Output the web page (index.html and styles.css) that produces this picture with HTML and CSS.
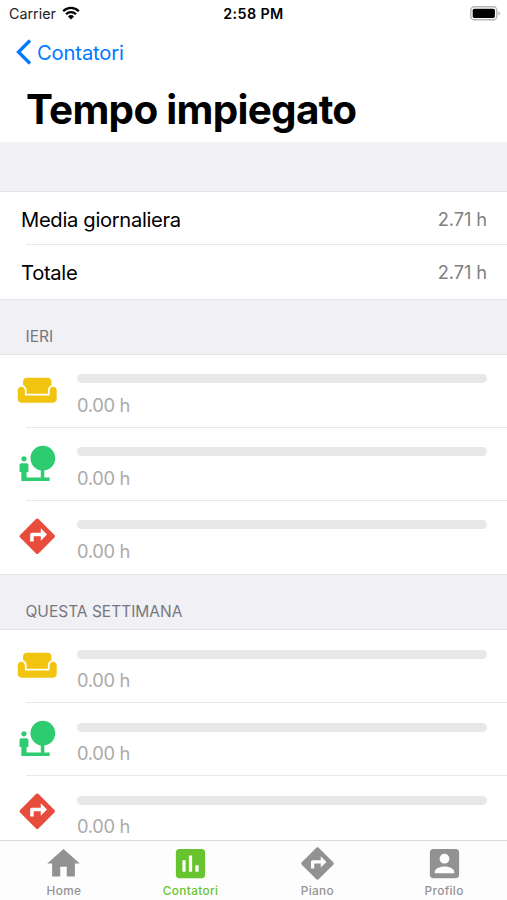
FILE: index.html
```html
<!DOCTYPE html>
<html lang="it">
<head>
    <meta charset="UTF-8">
    <meta name="viewport" content="width=device-width, initial-scale=1.0">
    <title>Tempo impiegato</title>
    <link rel="stylesheet" href="styles.css">
</head>
<body>
    <!-- Shared icons -->
    <svg class="sprite" width="0" height="0">
        <symbol id="sofa" viewBox="0 0 24 24"><path d="M21 10c-1.1 0-2 .9-2 2v3H5v-3c0-1.1-.9-2-2-2s-2 .9-2 2v5c0 1.1.9 2 2 2h18c1.1 0 2-.9 2-2v-5c0-1.1-.9-2-2-2zm-3-5H6c-1.1 0-2 .9-2 2v2.15c1.16.41 2 1.51 2 2.82V14h12v-2.03c0-1.3.84-2.4 2-2.82V7c0-1.1-.9-2-2-2z"/></symbol>
        <symbol id="nature" viewBox="0 0 24 24"><path d="M22.17 9.17c0-3.87-3.13-7-7-7s-7 3.13-7 7c0 3.47 2.52 6.34 5.83 6.89V20H6v-3h1v-4c0-.55-.45-1-1-1H3c-.55 0-1 .45-1 1v4h1v5h16v-2h-3v-3.88c3.47-.41 6.17-3.36 6.17-6.95zM4.5 11c.83 0 1.5-.67 1.5-1.5S5.33 8 4.5 8 3 8.67 3 9.5 3.67 11 4.5 11z"/></symbol>
        <symbol id="directions" viewBox="0 0 24 24"><path d="M21.71 11.29l-9-9c-.39-.39-1.02-.39-1.41 0l-9 9c-.39.39-.39 1.02 0 1.41l9 9c.39.39 1.02.39 1.41 0l9-9c.39-.38.39-1.01 0-1.41zM14 14.5V12h-4v3H8v-4c0-.55.45-1 1-1h5V7.5l3.5 3.5-3.5 3.5z"/></symbol>
    </svg>

    <div class="screen">
        <div class="status-bar">
            <div class="carrier">
                <span>Carrier</span>
                <svg class="wifi" viewBox="0 0 18 14">
                    <path d="M1.2 5.2a11 11 0 0 1 15.6 0M4 8.2a7.1 7.1 0 0 1 10 0" fill="none" stroke="#000" stroke-width="2.3"/>
                    <path d="M9 13.6L5.9 10.4a4.5 4.5 0 0 1 6.2 0z"/>
                </svg>
            </div>
            <div class="clock">2:58 PM</div>
            <svg class="battery" viewBox="0 0 31 15">
                <rect x=".8" y=".8" width="26" height="13" rx="3.6" fill="#fff" stroke="#b5b5b5" stroke-width="1.4"/>
                <rect x="2.7" y="2.7" width="22.2" height="9.2" rx="1.6"/>
                <path d="M28.4 5.2c2.2.8 2.2 3.4 0 4.2z" fill="#b5b5b5"/>
            </svg>
        </div>

        <div class="nav">
            <svg class="chevron" viewBox="0 0 16 26"><path d="M14 1.5L2.5 13 14 24.5" fill="none" stroke="#007aff" stroke-width="3.3"/></svg>
            <span>Contatori</span>
        </div>
        <h1>Tempo impiegato</h1>

        <div class="list">
            <div class="section-header first"></div>
            <div class="row summary"><span>Media giornaliera</span><span class="value">2.71 h</span></div>
            <div class="row summary"><span>Totale</span><span class="value">2.71 h</span></div>

            <div class="section-header">IERI</div>
            <div class="row">
                <svg class="icon yellow"><use href="#sofa"/></svg>
                <div class="meter"><div class="bar"></div><div class="hours">0.00 h</div></div>
            </div>
            <div class="row">
                <svg class="icon green"><use href="#nature"/></svg>
                <div class="meter"><div class="bar"></div><div class="hours">0.00 h</div></div>
            </div>
            <div class="row">
                <svg class="icon red"><use href="#directions"/></svg>
                <div class="meter"><div class="bar"></div><div class="hours">0.00 h</div></div>
            </div>

            <div class="section-header">QUESTA SETTIMANA</div>
            <div class="row">
                <svg class="icon yellow"><use href="#sofa"/></svg>
                <div class="meter"><div class="bar"></div><div class="hours">0.00 h</div></div>
            </div>
            <div class="row">
                <svg class="icon green"><use href="#nature"/></svg>
                <div class="meter"><div class="bar"></div><div class="hours">0.00 h</div></div>
            </div>
            <div class="row">
                <svg class="icon red"><use href="#directions"/></svg>
                <div class="meter"><div class="bar"></div><div class="hours">0.00 h</div></div>
            </div>
        </div>

        <div class="tab-bar">
            <div class="tab">
                <svg viewBox="0 0 24 24"><path d="M10 20v-6h4v6h5v-8h3L12 3 2 12h3v8z"/></svg>
                <span>Home</span>
            </div>
            <div class="tab active">
                <svg viewBox="0 0 24 24"><path d="M19 3H5c-1.1 0-2 .9-2 2v14c0 1.1.9 2 2 2h14c1.1 0 2-.9 2-2V5c0-1.1-.9-2-2-2zM9 17H7v-7h2v7zm4 0h-2V7h2v10zm4 0h-2v-4h2v4z"/></svg>
                <span>Contatori</span>
            </div>
            <div class="tab">
                <svg><use href="#directions"/></svg>
                <span>Piano</span>
            </div>
            <div class="tab">
                <svg viewBox="0 0 24 24"><path d="M3 5v14c0 1.1.89 2 2 2h14c1.1 0 2-.9 2-2V5c0-1.1-.9-2-2-2H5c-1.11 0-2 .9-2 2zm12 4c0 1.66-1.34 3-3 3s-3-1.34-3-3 1.34-3 3-3 3 1.34 3 3zm-9 8c0-2 4-3.1 6-3.1s6 1.1 6 3.1v1H6v-1z"/></svg>
                <span>Profilo</span>
            </div>
        </div>
    </div>
</body>
</html>
```
FILE: styles.css
```css
* {
    margin: 0;
    padding: 0;
    box-sizing: border-box;
}

body {
    font-family: Inter, 'Liberation Sans', sans-serif;
    background: #fff;
    color: #000;
    overflow: hidden;
}

svg {
    display: block;
    flex: none;
}

.sprite {
    position: absolute;
}

.screen {
    width: 507px;
    height: 900px;
    display: flex;
    flex-direction: column;
    overflow: hidden;
}

.status-bar {
    height: 27px;
    flex: none;
    display: grid;
    grid-template-columns: 1fr auto 1fr;
    align-items: center;
    padding: 0 6px 0 9px;
    font-size: 14.3px;
}

.carrier {
    display: flex;
    align-items: center;
    gap: 6px;
    color: #222;
}

.wifi {
    width: 18px;
    height: 14px;
    margin-top: -2px;
}

.clock {
    margin-right: 3px;
    font-weight: 600;
    letter-spacing: 0.4px;
}

.battery {
    width: 31px;
    height: 15px;
    margin-top: -1px;
    justify-self: end;
}

.nav {
    height: 50px;
    flex: none;
    display: flex;
    align-items: center;
    gap: 5px;
    padding-left: 16px;
    color: #007aff;
    font-size: 20.2px;
    letter-spacing: -0.15px;
}

.chevron {
    width: 16px;
    height: 26px;
}

h1 {
    height: 65px;
    flex: none;
    padding-left: 26px;
    font-size: 40.4px;
    line-height: 66px;
    font-weight: 700;
    letter-spacing: -0.7px;
    white-space: nowrap;
}

.list {
    flex: 1;
    min-height: 0;
    overflow: hidden;
}

.section-header {
    height: 56.2px;
    padding: 27.3px 0 0 25.5px;
    background: #f0f0f5;
    border-top: 1px solid #e6e6ea;
    border-bottom: 1px solid #e4e4e8;
    color: #77777c;
    font-size: 15.5px;
    line-height: 19px;
}

.section-header.first {
    height: 50px;
    border-top-color: #f3f3f7;
}

.row {
    height: 73px;
    display: flex;
    align-items: flex-start;
    padding: 14.5px 20px 0 16px;
    background: linear-gradient(#e9e9eb, #e9e9eb) 26px 100% / 100% 1px no-repeat;
}

.row.summary {
    height: 53.3px;
    align-items: center;
    justify-content: space-between;
    padding: 1px 20px 0 21px;
    font-size: 20.2px;
    letter-spacing: -0.32px;
}

.row:has(+ .section-header) {
    background: none;
}

.row .value {
    color: #808080;
    font-size: 18.3px;
    letter-spacing: -0.1px;
}

.icon {
    width: 42.5px;
    height: 42.5px;
}

.yellow {
    fill: #f1c40f;
}

.green {
    fill: #2ecc71;
}

.red {
    fill: #e74c3c;
}

.meter {
    flex: 1;
    margin-left: 18.5px;
    padding-top: 5.2px;
}

.bar {
    height: 9px;
    border-radius: 5px;
    background: #e8e8e8;
}

.hours {
    margin-top: 10.6px;
    color: #aaa;
    font-size: 18.3px;
    line-height: 23px;
    letter-spacing: -0.3px;
}

.tab-bar {
    height: 60px;
    flex: none;
    display: flex;
    border-top: 1px solid #d8d8d8;
    background: #fdfdfd;
}

.tab {
    flex: 1;
    display: flex;
    flex-direction: column;
    align-items: center;
    padding: 3px 0 0 1px;
    color: #929292;
    font-size: 11.8px;
    font-weight: 500;
    line-height: 17px;
    letter-spacing: 0.35px;
}

.tab svg {
    width: 39px;
    height: 39px;
    fill: currentColor;
}

.tab.active {
    color: #67c32e;
}
```
